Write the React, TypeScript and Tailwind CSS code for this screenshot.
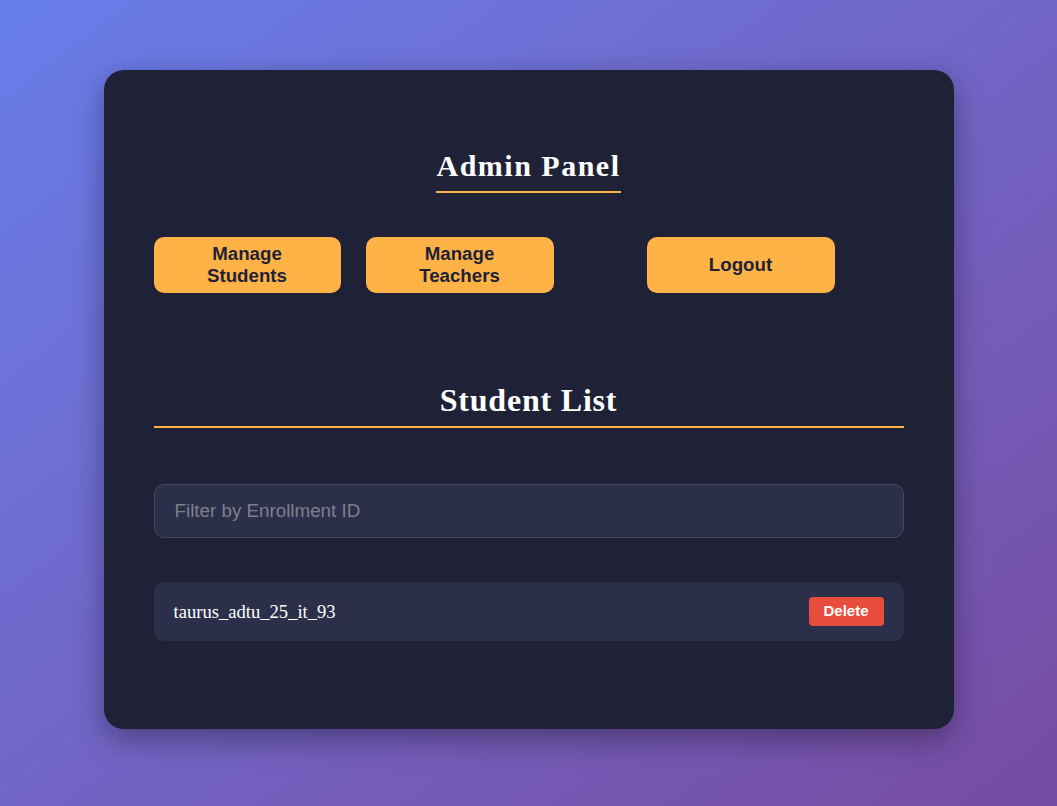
export default function App() {
  return (
    <div className="min-h-screen w-full bg-gradient-to-br from-[#667eea] to-[#764ba2] flex justify-center pt-[70px]">
      <div className="w-[850px] h-[659px] rounded-[20px] bg-[#1f2236] px-[50px] pt-[50px] shadow-[0_10px_30px_rgba(0,0,0,0.35)]">
        <div className="flex justify-center pt-[28px]">
          <h1 className="font-['Liberation_Serif',serif] text-[30px] font-bold leading-[35px] tracking-[1.5px] text-white border-b-2 border-[#ffb347] pb-[8px]">
            Admin Panel
          </h1>
        </div>

        <div className="mt-[44px] flex font-['Liberation_Sans',Arial,sans-serif] text-[18.7px] font-bold leading-[22px] text-[#1f2236]">
          <button className="w-[187px] h-[56px] rounded-[10px] bg-[#ffb347]">Manage<br />Students</button>
          <button className="ml-[25px] w-[188px] h-[56px] rounded-[10px] bg-[#ffb347]">Manage<br />Teachers</button>
          <button className="ml-[93px] w-[188px] h-[56px] rounded-[10px] bg-[#ffb347]">Logout</button>
        </div>

        <h2 className="mt-[88px] text-center font-['Liberation_Serif',serif] text-[32px] font-bold leading-[38px] tracking-[0.8px] text-white border-b-2 border-[#ffb347] pb-[7px]">
          Student List
        </h2>

        <input
          placeholder="Filter by Enrollment ID"
          className="mt-[56px] block w-full h-[54px] rounded-[10px] border border-[#46485c] bg-[#2c2f4a] px-[20px] font-['Liberation_Sans',Arial,sans-serif] text-[18.8px] text-white placeholder:text-[#7d7f8c] outline-none"
        />

        <div className="mt-[44px] flex h-[59px] items-center justify-between rounded-[10px] bg-[#2c2f4a] px-[20px]">
          <span className="font-['Liberation_Serif',serif] text-[18.6px] text-white">taurus_adtu_25_it_93</span>
          <button className="h-[29px] w-[75px] rounded-[4px] bg-[#e74c3c] font-['Liberation_Sans',Arial,sans-serif] text-[15px] font-bold text-white">
            Delete
          </button>
        </div>
      </div>
    </div>
  );
}
